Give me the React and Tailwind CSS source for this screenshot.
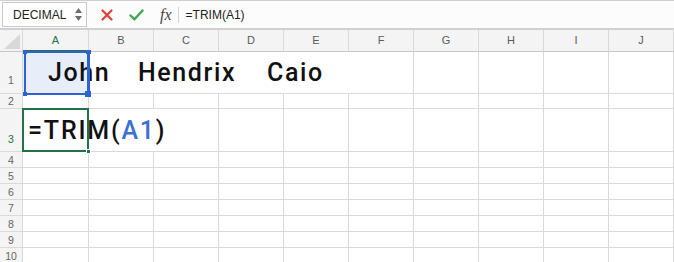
import React from "react";

const COLS = ["A", "B", "C", "D", "E", "F", "G", "H", "I", "J"];

const ROWS = [
  { n: 1, h: "h-[42px]", hdr: "items-end pb-[8px]" },
  { n: 2, h: "h-[15px]", hdr: "items-center" },
  { n: 3, h: "h-[43px]", hdr: "items-end pb-[7px]" },
  { n: 4, h: "h-[16px]", hdr: "items-center" },
  { n: 5, h: "h-[16px]", hdr: "items-center" },
  { n: 6, h: "h-[16px]", hdr: "items-center" },
  { n: 7, h: "h-[16px]", hdr: "items-center" },
  { n: 8, h: "h-[16px]", hdr: "items-center" },
  { n: 9, h: "h-[16px]", hdr: "items-center" },
  { n: 10, h: "h-[16px]", hdr: "items-center" },
];

const GRID = "grid grid-cols-[23px_66px_repeat(8,65px)_1fr]";
const LINE = "border-[#d9d9d9]";

function Toolbar() {
  return (
    <div className="flex h-[29px] items-start border-t border-b border-[#cfcfcf] bg-[#fcfcfc] font-['Liberation_Sans',Arial,sans-serif]">
      <div className="ml-[2px] mt-[1px] flex h-[25px] w-[85px] items-center border border-[#c9c9c9] bg-white">
        <span className="pl-[10px] text-[12px] leading-none text-[#222]">DECIMAL</span>
        <div className="ml-auto mr-[4px] flex flex-col items-center gap-[3px]">
          <svg width="7" height="5" viewBox="0 0 7 5"><path d="M3.5 0 L7 5 L0 5 Z" fill="#6d6d6d" /></svg>
          <svg width="7" height="5" viewBox="0 0 7 5"><path d="M0 0 L7 0 L3.5 5 Z" fill="#6d6d6d" /></svg>
        </div>
      </div>
      <div className="ml-[14px] mt-[8px]">
        <svg width="12" height="12" viewBox="0 0 12 12">
          <path d="M1.5 1.5 L10.5 10.5 M10.5 1.5 L1.5 10.5" stroke="#e0403c" strokeWidth="2.2" strokeLinecap="round" />
        </svg>
      </div>
      <div className="ml-[16px] mt-[8px]">
        <svg width="15" height="12" viewBox="0 0 15 12">
          <path d="M1.5 6.5 L5.5 10.3 L13.5 1.5" fill="none" stroke="#3ea64c" strokeWidth="2.4" strokeLinecap="round" strokeLinejoin="round" />
        </svg>
      </div>
      <div className="ml-[16px] mt-[4px] font-['Liberation_Serif',serif] text-[16px] italic leading-[20px] text-[#444]">
        fx
      </div>
      <div className="ml-[6px] mt-[6px] h-[16px] w-px bg-[#d4d4d4]" />
      <div className="ml-[7px] mt-[8px] text-[12px] leading-[12px] text-[#222]">=TRIM(A1)</div>
    </div>
  );
}

function HeaderRow() {
  return (
    <div className={`${GRID} h-[23px] border-t border-[#d0d0d0] bg-[#f4f4f4] font-['Liberation_Sans',Arial,sans-serif]`}>
      <div className={`relative border-r border-b ${LINE} border-b-[#c6c6c6]`}>
        <svg className="absolute bottom-[2px] right-[2px]" width="16" height="15" viewBox="0 0 16 15">
          <path d="M16 0 L16 15 L0 15 Z" fill="#d8d8d8" />
        </svg>
      </div>
      {COLS.map((c) =>
        c === "A" ? (
          <div key={c} className="flex items-center justify-center border-r border-b-2 border-r-[#d9d9d9] border-b-[#217346] text-[11px] text-[#217346]">
            {c}
          </div>
        ) : (
          <div key={c} className={`flex items-center justify-center border-r border-b ${LINE} border-b-[#c6c6c6] text-[11px] text-[#5b5b5b]`}>
            {c}
          </div>
        )
      )}
    </div>
  );
}

function CellText() {
  return (
    <div className="mt-[6px] whitespace-nowrap pl-[25px] font-['Roboto',sans-serif] text-[25px] font-medium leading-[30px] tracking-[1.6px] text-[#111]">
      <span className="inline-block w-[90px]">John</span>
      <span className="inline-block w-[129px]">Hendrix</span>
      <span className="inline-block">Caio</span>
    </div>
  );
}

function Row({ r }) {
  const active = r.n === 3;
  return (
    <div className={`${GRID} ${r.h}`}>
      <div className={`flex justify-center border-r border-b ${LINE} bg-[#f4f4f4] ${r.hdr} font-['Liberation_Sans',Arial,sans-serif] text-[10.5px] leading-[10px] ${active ? "text-[#217346]" : "text-[#666]"}`}>
        {r.n}
      </div>
      {COLS.map((c, i) => {
        const hideRight = (r.n === 1 && i <= 4) || (r.n === 3 && i <= 1);
        const base = `border-b ${LINE} ${hideRight ? "" : "border-r"}`;
        if (r.n === 1 && c === "A") {
          return (
            <div key={c} className={`relative ${base} bg-[#e8eef9]`}>
              <CellText />
              <div className="pointer-events-none absolute left-[1px] top-[-1px] h-[44px] w-[66px] border-2 border-r-[3px] border-[#2f62cf]">
                <div className="absolute left-[-3px] top-[-3px] h-[4px] w-[4px] bg-[#2f62cf]" />
                <div className="absolute right-[-4px] top-[-3px] h-[4px] w-[5px] bg-[#2f62cf]" />
                <div className="absolute bottom-[-3px] left-[-3px] h-[4px] w-[4px] bg-[#2f62cf]" />
                <div className="absolute bottom-[-4px] right-[-4px] h-[6px] w-[6px] bg-[#2f62cf]" />
              </div>
            </div>
          );
        }
        if (r.n === 3 && c === "A") {
          return (
            <div key={c} className={`relative ${base}`}>
              <div className="mt-[7px] whitespace-nowrap pl-[5px] font-['Roboto',sans-serif] text-[25px] font-medium leading-[30px] tracking-[1.8px] text-[#111]">
                =TRIM(<span className="text-[#3a6fd3]">A1</span>)
              </div>
              <div className="pointer-events-none absolute left-[-1px] top-[-1px] h-[44px] w-[67px] border-2 border-[#217346]">
                <div className="absolute bottom-[-4px] right-[-4px] h-[5px] w-[5px] border border-white bg-[#217346]" />
              </div>
            </div>
          );
        }
        return <div key={c} className={base} />;
      })}
    </div>
  );
}

export default function App() {
  return (
    <div className="h-[262px] w-[674px] overflow-hidden bg-white">
      <Toolbar />
      <HeaderRow />
      {ROWS.map((r) => (
        <Row key={r.n} r={r} />
      ))}
    </div>
  );
}
